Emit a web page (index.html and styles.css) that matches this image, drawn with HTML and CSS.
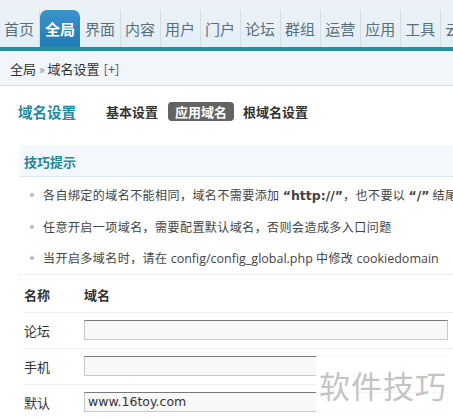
FILE: index.html
```html
<!DOCTYPE html>
<html>
<head>
<meta charset="utf-8">
<link rel="stylesheet" href="styles.css">
</head>
<body>
<div class="nav">
  <span class="tab">首页</span>
  <span class="tab active">全局</span>
  <span class="tab">界面</span>
  <span class="tab">内容</span>
  <span class="tab">用户</span>
  <span class="tab">门户</span>
  <span class="tab">论坛</span>
  <span class="tab">群组</span>
  <span class="tab">运营</span>
  <span class="tab">应用</span>
  <span class="tab">工具</span>
  <span class="tab last">云</span>
</div>
<div class="crumb">全局 <span class="raquo">»</span> 域名设置 <span class="plus">[+]</span></div>
<div class="main">
  <div class="heading">
    <span class="title">域名设置</span>
    <span class="sub">基本设置</span>
    <span class="sub current">应用域名</span>
    <span class="sub">根域名设置</span>
  </div>
  <div class="tipbox">技巧提示</div>
  <ul class="tips">
    <li>各自绑定的域名不能相同，域名不需要添加 <b>“http://”</b>，也不要以 <b>“/”</b> 结尾</li>
    <li>任意开启一项域名，需要配置默认域名，否则会造成多入口问题</li>
    <li>当开启多域名时，请在 <span class="en">config/config_global.php</span> 中修改 <span class="en">cookiedomain</span></li>
  </ul>
  <div class="table">
    <div class="row head"><span class="name">名称</span><span class="val">域名</span></div>
    <div class="row"><span class="name">论坛</span><span class="val"><span class="input"></span></span></div>
    <div class="row"><span class="name">手机</span><span class="val"><span class="input"></span></span></div>
    <div class="row"><span class="name">默认</span><span class="val"><span class="input">www.16toy.com</span></span></div>
  </div>
</div>
<div class="mark">软件技巧</div>
</body>
</html>
```
FILE: styles.css
```css
html, body {
  margin: 0;
  padding: 0;
  background: #fff;
  overflow: hidden;
  width: 453px;
  height: 418px;
}
body {
  font-family: "Noto Sans CJK SC", "Liberation Sans", sans-serif;
  color: #333;
  position: relative;
}
.nav {
  height: 47px;
  border-bottom: 4px solid #2a8ca2;
  background: linear-gradient(#edf3f8, #e4eef5);
  display: flex;
  align-items: flex-end;
  white-space: nowrap;
  overflow: hidden;
}
.tab {
  font-size: 15px;
  line-height: 37px;
  height: 37px;
  padding: 0 5px 0 4px;
  color: #56717e;
  border-right: 1px solid #d3dde4;
  flex: none;
}
.tab.last { border-right: none; }
.tab.active {
  background: linear-gradient(#3b93cc, #1f7cb4);
  color: #fff;
  font-weight: bold;
  border-radius: 7px 7px 0 0;
  border-right: none;
  padding: 0 5px;
  margin-right: 1px;
}
.crumb {
  height: 34px;
  line-height: 36px;
  background: #f2f6fa;
  border-bottom: 1px solid #d8dfe6;
  padding-left: 10px;
  font-size: 13px;
  color: #333;
}
.raquo { color: #888; font-size: 12px; }
.plus { color: #555; margin-left: 1px; }
.main {
  padding-left: 18px;
}
.heading {
  display: flex;
  align-items: center;
  height: 24px;
  margin-top: 13px;
}
.title {
  font-size: 14.5px;
  font-weight: bold;
  color: #1f8ba4;
  margin-right: 30px;
}
.sub {
  font-size: 13px;
  font-weight: bold;
  color: #333;
  margin-right: 10px;
  line-height: 19px;
}
.sub.current {
  background: #636363;
  color: #fff;
  border-radius: 4px;
  padding: 0 7px;
  margin-right: 9px;
}
.tipbox {
  margin-top: 22px;
  margin-left: 2px;
  height: 31px;
  line-height: 33px;
  background: #f3f8fc;
  border-bottom: 1px dotted #cfd9e0;
  padding-left: 4px;
  font-size: 13px;
  font-weight: bold;
  color: #21899f;
}
.tips {
  list-style: none;
  margin: 0;
  padding: 2px 0 0 12px;
  border-bottom: 1px dotted #dde3e8;
}
.tips li {
  font-size: 12px;
  letter-spacing: 0.45px;
  height: 31.5px;
  line-height: 31.5px;
  white-space: nowrap;
  color: #444;
  position: relative;
  padding-left: 13px;
}
.tips li::before {
  content: "";
  position: absolute;
  left: 0;
  top: 14px;
  width: 4px;
  height: 4px;
  background: #c6c6c6;
  transform: rotate(45deg);
}
.tips b { font-family: "DejaVu Sans", "Noto Sans CJK SC", sans-serif; font-size: 12.5px; color: #444; letter-spacing: 0; }
.en { font-family: "Open Sans", "Liberation Sans", sans-serif; font-size: 12.5px; letter-spacing: 0; }
.table { margin-left: 6px; padding-top: 2px; }
.row {
  display: flex;
  align-items: center;
  height: 35px;
  border-bottom: 1px dotted #e0e5e9;
  font-size: 13px;
}
.name { width: 60px; flex: none; }
.row.head .name, .row.head .val { font-weight: bold; }
.val { flex: 1; }
.input {
  display: block;
  width: 359px;
  height: 18px;
  line-height: 18px;
  border: 1px solid #c9c9c9;
  border-top-color: #7a7a7a;
  background: #f8f8f8;
  font-family: "DejaVu Sans", sans-serif;
  font-size: 12.5px;
  padding-left: 3px;
  box-sizing: content-box;
}
.mark {
  position: absolute;
  right: 0;
  bottom: 0;
  width: 137px;
  height: 66px;
  background: rgba(255,255,255,0.92);
  color: #c4c4c4;
  font-size: 31px;
  line-height: 66px;
  text-align: right;
  padding-right: 6px;
  box-sizing: border-box;
  letter-spacing: 1px;
}
```
